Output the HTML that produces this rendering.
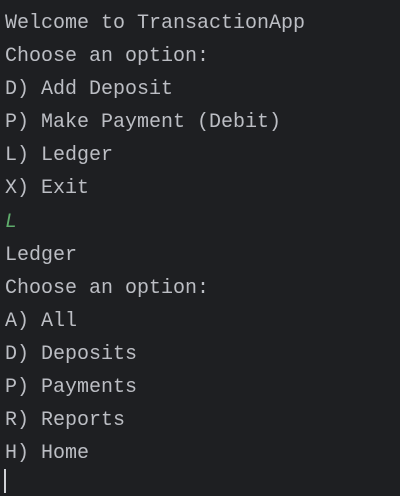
<html><head><style>
body{margin:0;width:400px;height:496px;background:#1e1f22;overflow:hidden}
pre{margin:0;position:absolute;left:5px;top:7px;font-family:"Liberation Mono",monospace;font-size:20px;line-height:33.1px;color:#bcbec4}
.g{color:#5fad6c;font-style:italic}
.c{position:absolute;left:4px;top:469px;width:2px;height:24px;background:#cfd1d6}
</style></head><body><pre>Welcome to TransactionApp
Choose an option:
D) Add Deposit
P) Make Payment (Debit)
L) Ledger
X) Exit
<span class="g">L</span>
Ledger
Choose an option:
A) All
D) Deposits
P) Payments
R) Reports
H) Home</pre><div class="c"></div></body></html>
